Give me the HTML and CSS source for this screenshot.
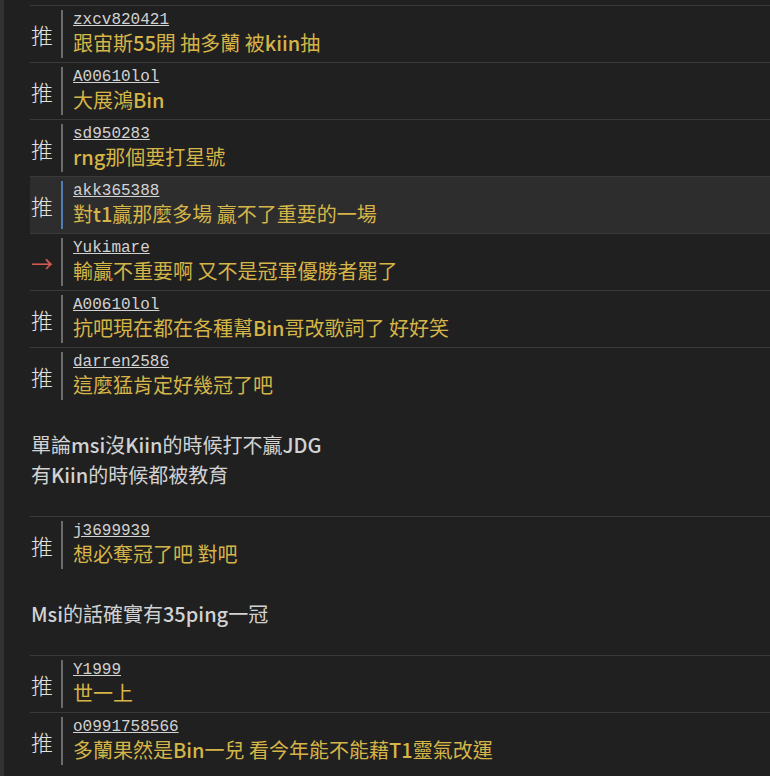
FILE: index.html
```html
<!DOCTYPE html>
<html>
<head>
	<meta charset="utf-8">
	<title>推文</title>
	<link rel="stylesheet" href="styles.css">
</head>
<body>
	<div class="thread">
		<div class="push">
			<span class="tag">推</span>
			<div class="body">
				<a class="user">zxcv820421</a>
				<div class="msg">跟宙斯<b>55</b>開 抽多蘭 被<b>kiin</b>抽</div>
			</div>
		</div>
		<div class="push">
			<span class="tag">推</span>
			<div class="body">
				<a class="user">A00610lol</a>
				<div class="msg">大展鴻<b>Bin</b></div>
			</div>
		</div>
		<div class="push">
			<span class="tag">推</span>
			<div class="body">
				<a class="user">sd950283</a>
				<div class="msg"><b>rng</b>那個要打星號</div>
			</div>
		</div>
		<div class="push hl">
			<span class="tag">推</span>
			<div class="body">
				<a class="user">akk365388</a>
				<div class="msg">對<b>t1</b>贏那麼多場 贏不了重要的一場</div>
			</div>
		</div>
		<div class="push">
			<span class="tag arrow">→</span>
			<div class="body">
				<a class="user">Yukimare</a>
				<div class="msg">輸贏不重要啊 又不是冠軍優勝者罷了</div>
			</div>
		</div>
		<div class="push">
			<span class="tag">推</span>
			<div class="body">
				<a class="user">A00610lol</a>
				<div class="msg">抗吧現在都在各種幫<b>Bin</b>哥改歌詞了 好好笑</div>
			</div>
		</div>
		<div class="push">
			<span class="tag">推</span>
			<div class="body">
				<a class="user">darren2586</a>
				<div class="msg">這麼猛肯定好幾冠了吧</div>
			</div>
		</div>

		<div class="note">
			單論<b>msi</b>沒<b>Kiin</b>的時候打不贏<b>JDG</b><br>
			有<b>Kiin</b>的時候都被教育
		</div>

		<div class="push">
			<span class="tag">推</span>
			<div class="body">
				<a class="user">j3699939</a>
				<div class="msg">想必奪冠了吧 對吧</div>
			</div>
		</div>

		<div class="note">
			<b>Msi</b>的話確實有<b>35ping</b>一冠
		</div>

		<div class="push">
			<span class="tag">推</span>
			<div class="body">
				<a class="user">Y1999</a>
				<div class="msg">世一上</div>
			</div>
		</div>
		<div class="push">
			<span class="tag">推</span>
			<div class="body">
				<a class="user">o0991758566</a>
				<div class="msg">多蘭果然是<b>Bin</b>一兒 看今年能不能藉<b>T1</b>靈氣改運</div>
			</div>
		</div>
	</div>
</body>
</html>
```

FILE: styles.css
```css
body {
	margin: 0;
	min-height: 100vh;
	background-color: #202020;
	border-left: 4px solid #323232;
	font-family: "Noto Sans CJK TC", sans-serif;
}

.thread {
	padding: 5px 0 0 26px;
}

.push {
	display: flex;
	height: 56px;
	border-top: 1px solid #3a3a3a;
}

.push.hl {
	background-color: #2d2d2d;
}

.tag {
	align-self: center;
	width: 30px;
	padding-left: 1px;
	font-size: 22px;
	line-height: 26px;
	color: #e2e2e2;
	font-weight: 300;
}

.tag.arrow {
	color: #d65a52;
	font-weight: normal;
}

.body {
	margin: 4px 0;
	padding: 1px 0 3px 10px;
	border-left: 2px solid #6c6c6c;
}

.hl .body {
	border-left-color: #4f7fb0;
}

.user {
	display: block;
	font-family: "Liberation Mono", monospace;
	font-size: 16px;
	line-height: 19px;
	color: #d2d2d2;
	text-decoration: underline;
}

.msg {
	font-size: 20px;
	line-height: 25px;
	color: #d5b548;
}

b {
	font-weight: 500;
}

.note {
	padding: 26px 0 26px 1px;
	font-size: 20px;
	line-height: 30px;
	color: #d2d2d2;
}
```
